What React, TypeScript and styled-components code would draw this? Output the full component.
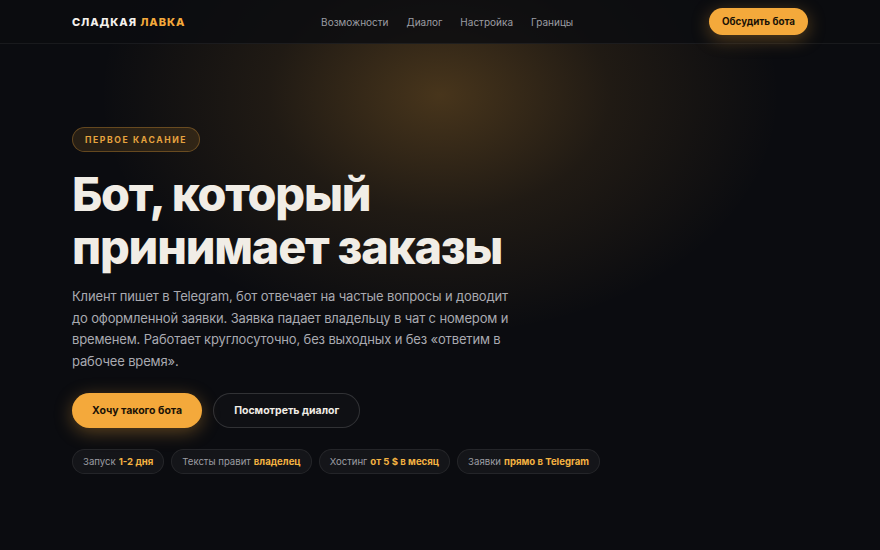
import styled, { createGlobalStyle } from "styled-components";

const GlobalStyle = createGlobalStyle`
  * { box-sizing: border-box; }
  html, body { margin: 0; padding: 0; background: #0b0c10; }
  body {
    font-family: Inter, "Noto Sans", sans-serif;
    color: #f1ede6;
    -webkit-font-smoothing: antialiased;
  }
`;

const Page = styled.div`
  position: relative;
  width: 100%;
  min-height: 550px;
  overflow: hidden;
  background:
    radial-gradient(ellipse 340px 240px at 440px 95px, rgba(245, 170, 60, 0.26), rgba(245, 170, 60, 0.09) 50%, rgba(245, 170, 60, 0) 100%),
    #0b0c10;
`;

const HeaderBar = styled.header`
  height: 44px;
  display: flex;
  align-items: center;
  justify-content: space-between;
  padding: 0 72px;
  border-bottom: 1px solid rgba(255, 255, 255, 0.06);
  background: rgba(11, 12, 16, 0.82);
`;

const Logo = styled.div`
  font-size: 11px;
  font-weight: 800;
  letter-spacing: 0.9px;
  color: #f4f1ec;
  span { color: #f4a93b; }
`;

const Nav = styled.nav`
  display: flex;
  gap: 18px;
  a {
    font-size: 10px;
    color: #9c9da3;
    text-decoration: none;
  }
`;

const Pill = styled.button<{ $variant?: "primary" | "ghost"; $size?: "sm" | "lg" }>`
  font-family: inherit;
  border-radius: 999px;
  font-weight: 700;
  cursor: pointer;
  white-space: nowrap;
  height: ${(p) => (p.$size === "sm" ? "27px" : "35px")};
  padding: ${(p) => (p.$size === "sm" ? "0 13px" : "0 20px")};
  font-size: ${(p) => (p.$size === "sm" ? "9.8px" : "10.5px")};
  ${(p) =>
    p.$variant === "ghost"
      ? `
    background: rgba(255,255,255,0.02);
    color: #f1ede6;
    border: 1px solid rgba(255,255,255,0.14);
  `
      : `
    background: #f4a93b;
    color: #1a1206;
    border: none;
    box-shadow: 0 4px 18px rgba(244, 169, 59, 0.35);
  `}
`;

const Hero = styled.main`
  padding: 83px 72px 0;
  display: flex;
  flex-direction: column;
  align-items: flex-start;
`;

const Badge = styled.div`
  height: 25px;
  display: flex;
  align-items: center;
  padding: 0 12px;
  border-radius: 999px;
  background: rgba(244, 169, 59, 0.12);
  border: 1px solid rgba(244, 169, 59, 0.3);
  color: #e6a33f;
  font-size: 8.6px;
  font-weight: 700;
  letter-spacing: 1.6px;
  text-transform: uppercase;
`;

const Title = styled.h1`
  margin: 16px 0 0;
  font-size: 46.8px;
  line-height: 53px;
  font-weight: 800;
  letter-spacing: -1.2px;
  color: #f1ede6;
`;

const Lead = styled.p`
  margin: 12px 0 0;
  max-width: 445px;
  font-size: 13px;
  line-height: 21.5px;
  letter-spacing: -0.15px;
  color: #a9aab0;
`;

const Actions = styled.div`
  display: flex;
  gap: 11px;
  margin-top: 21px;
`;

const Chips = styled.div`
  display: flex;
  gap: 7px;
  margin-top: 21px;
`;

const Chip = styled.div`
  height: 25px;
  display: flex;
  align-items: center;
  padding: 0 10px;
  border-radius: 999px;
  background: rgba(255, 255, 255, 0.04);
  border: 1px solid rgba(255, 255, 255, 0.07);
  font-size: 9.6px;
  color: #9c9da3;
  white-space: nowrap;
  b {
    color: #f4b342;
    font-weight: 700;
    margin-left: 3px;
  }
`;

const chips = [
  ["Запуск", "1-2 дня"],
  ["Тексты правит", "владелец"],
  ["Хостинг", "от 5 $ в месяц"],
  ["Заявки", "прямо в Telegram"],
];

export default function App() {
  return (
    <>
      <GlobalStyle />
      <Page>
        <HeaderBar>
          <Logo>
            СЛАДКАЯ <span>ЛАВКА</span>
          </Logo>
          <Nav>
            <a href="#">Возможности</a>
            <a href="#">Диалог</a>
            <a href="#">Настройка</a>
            <a href="#">Границы</a>
          </Nav>
          <Pill $size="sm">Обсудить бота</Pill>
        </HeaderBar>
        <Hero>
          <Badge>Первое касание</Badge>
          <Title>
            Бот, который
            <br />
            принимает заказы
          </Title>
          <Lead>
            Клиент пишет в Telegram, бот отвечает на частые вопросы и доводит до
            оформленной заявки. Заявка падает владельцу в чат с номером и
            временем. Работает круглосуточно, без выходных и без «ответим в
            рабочее время».
          </Lead>
          <Actions>
            <Pill>Хочу такого бота</Pill>
            <Pill $variant="ghost">Посмотреть диалог</Pill>
          </Actions>
          <Chips>
            {chips.map(([label, value]) => (
              <Chip key={label}>
                {label}
                <b>{value}</b>
              </Chip>
            ))}
          </Chips>
        </Hero>
      </Page>
    </>
  );
}
